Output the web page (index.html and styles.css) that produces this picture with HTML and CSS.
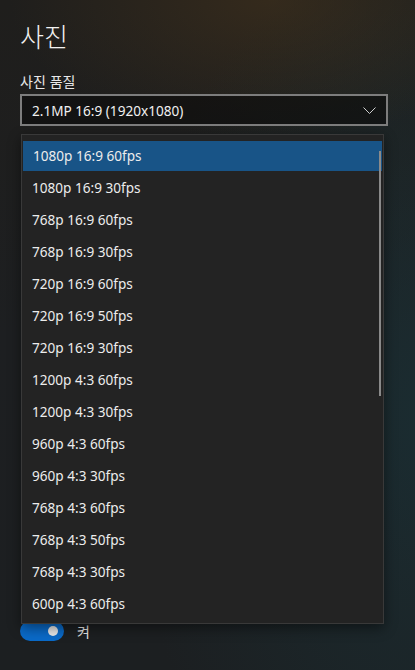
FILE: index.html
```html
<!DOCTYPE html>
<html lang="ko">
<head>
<meta charset="utf-8">
<link rel="stylesheet" href="styles.css">
</head>
<body>
<div class="page">
  <h1 class="title">사진</h1>
  <div class="label">사진 품질</div>
  <div class="select">
    <span class="select-text">2.1MP 16:9 (1920x1080)</span>
    <svg class="chev" width="13" height="8" viewBox="0 0 13 8"><path d="M0.5 0.5 L6.5 6.5 L12.5 0.5" fill="none" stroke="#cfcfcf" stroke-width="1"/></svg>
  </div>
  <div class="toggle-row">
    <span class="toggle"><span class="knob"></span></span>
    <span class="toggle-label">켜</span>
  </div>
  <div class="list">
    <div class="item selected">1080p 16:9 60fps</div>
    <div class="item">1080p 16:9 30fps</div>
    <div class="item">768p 16:9 60fps</div>
    <div class="item">768p 16:9 30fps</div>
    <div class="item">720p 16:9 60fps</div>
    <div class="item">720p 16:9 50fps</div>
    <div class="item">720p 16:9 30fps</div>
    <div class="item">1200p 4:3 60fps</div>
    <div class="item">1200p 4:3 30fps</div>
    <div class="item">960p 4:3 60fps</div>
    <div class="item">960p 4:3 30fps</div>
    <div class="item">768p 4:3 60fps</div>
    <div class="item">768p 4:3 50fps</div>
    <div class="item">768p 4:3 30fps</div>
    <div class="item">600p 4:3 60fps</div>
    <div class="scrollbar"></div>
  </div>
</div>
</body>
</html>
```
FILE: styles.css
```css
html, body {
  margin: 0;
  padding: 0;
  width: 415px;
  height: 670px;
  overflow: hidden;
}
body {
  background:
    radial-gradient(ellipse 260px 140px at 270px 0px, rgba(70, 52, 28, 0.55), rgba(70, 52, 28, 0) 100%),
    radial-gradient(ellipse 300px 500px at 430px 420px, rgba(25, 55, 62, 0.55), rgba(25, 55, 62, 0) 100%),
    linear-gradient(180deg, #1f1e1c 0%, #1d1f21 50%, #1c1f21 100%);
  font-family: "Noto Sans", "Noto Sans CJK KR", sans-serif;
  color: #ffffff;
}
.page {
  position: relative;
  padding: 18px 20px 0 20px;
  height: 652px;
}
.title {
  margin: 0;
  font-family: "Noto Sans CJK KR", sans-serif;
  font-weight: 300;
  font-size: 26px;
  line-height: 36px;
  color: #f2f2f2;
}
.label {
  margin-top: 17px;
  font-family: "Noto Sans CJK KR", sans-serif;
  font-size: 14px;
  line-height: 20px;
  color: #e8e8e8;
}
.select {
  margin-top: 3px;
  height: 28px;
  border: 2px solid #7d7d7d;
  background: rgba(10, 10, 10, 0.55);
  display: flex;
  align-items: center;
  justify-content: space-between;
  padding: 0 10px 0 10px;
  box-sizing: content-box;
  width: 344px;
}
.select-text {
  font-size: 13.6px;
  color: #f0f0f0;
}
.chev { margin-top: 2px; }
.toggle-row {
  margin-top: 495px;
  display: flex;
  align-items: center;
  gap: 13px;
}
.toggle {
  width: 44px;
  height: 20px;
  border-radius: 10px;
  background: #0a6ac8;
  display: flex;
  align-items: center;
  justify-content: flex-end;
  padding-right: 6px;
  box-sizing: border-box;
}
.knob {
  width: 10px;
  height: 10px;
  border-radius: 50%;
  background: #e8e8e8;
}
.toggle-label {
  font-family: "Noto Sans CJK KR", sans-serif;
  font-size: 14px;
  color: #e6e6e6;
}
.list {
  position: absolute;
  left: 21px;
  top: 134px;
  width: 361px;
  padding: 5px 0 3px 0;
  background: #232323;
  border: 1px solid #393939;
  box-shadow: 0 4px 12px rgba(0, 0, 0, 0.45);
}
.item {
  height: 32px;
  line-height: 32px;
  padding-left: 10px;
  font-size: 13.6px;
  color: #ececec;
}
.item.selected {
  background: #185487;
  height: 30px;
  line-height: 30px;
  margin: 1px 1px 1px 1px;
}
.scrollbar {
  position: absolute;
  right: 2px;
  top: 16px;
  width: 2px;
  height: 245px;
  background: #8a8a8a;
}
```
